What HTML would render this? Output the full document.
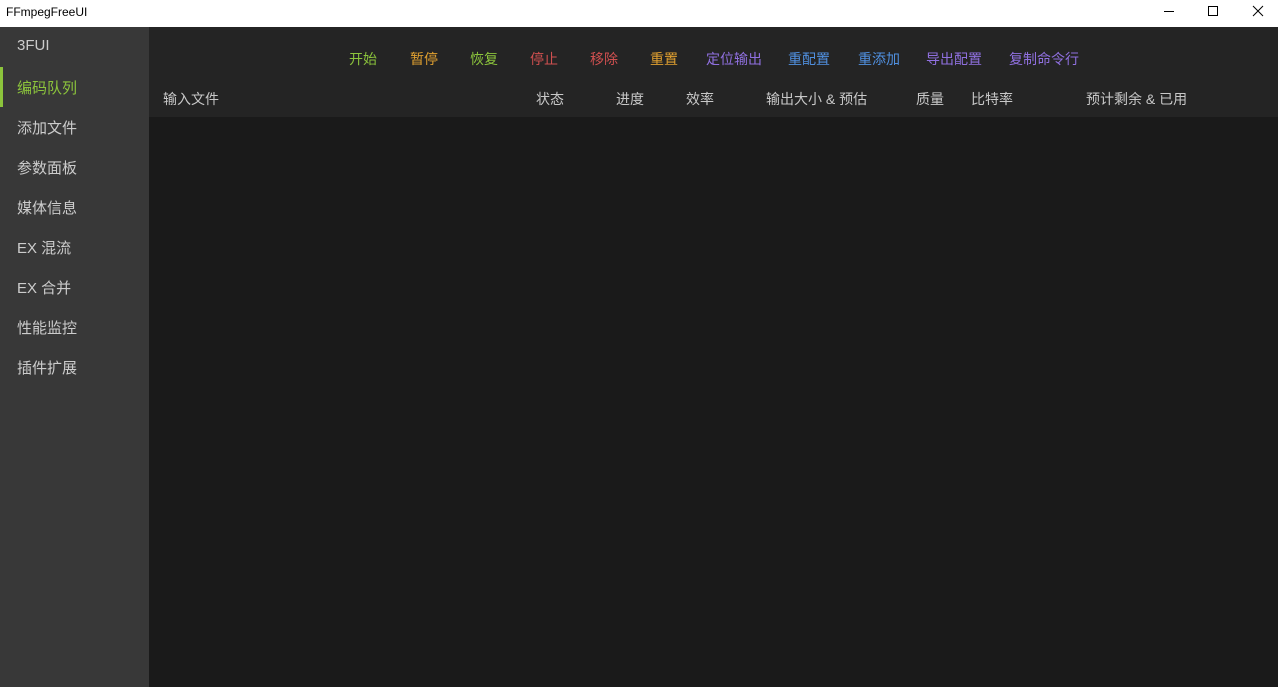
<!DOCTYPE html><html><head><meta charset="utf-8"><style>
body{margin:0;width:1278px;height:687px;overflow:hidden;background:#1a1a1a;font-family:"Liberation Sans","Noto Sans CJK SC",sans-serif;font-size:14px;position:relative}
.t{position:absolute;left:0;top:0;width:1278px;height:27px;background:#fff;color:#000;font-size:12px}
.t span{position:absolute;left:6px;top:5px}
.side{position:absolute;left:0;top:27px;width:149px;height:660px;background:#383838}
.side div{position:absolute;left:17px;color:#cccccc;font-size:15px}
.bar{position:absolute;left:0;top:40px;width:3px;height:40px;background:#8cc43c}
.main{position:absolute;left:149px;top:27px;width:1129px;height:90px;background:#242424}
.a{position:absolute;top:49px;font-size:14px}
.h{position:absolute;top:89px;color:#c8c8c8;font-size:14px}
</style></head><body>
<div class="t"><span>FFmpegFreeUI</span>
<svg style="position:absolute;left:1150px;top:0" width="128" height="27"><path d="M14 11.5h10" stroke="#000"/><path d="M58.5 6.5h9v9h-9z" stroke="#000" fill="none"/><path d="M103 6l10 10M113 6l-10 10" stroke="#000"/></svg></div>
<div class="side">
<div style="top:10px">3FUI</div><div style="top:50px;color:#8cc43c">编码队列</div><div style="top:90px">添加文件</div><div style="top:130px">参数面板</div><div style="top:170px">媒体信息</div><div style="top:210px">EX 混流</div><div style="top:250px">EX 合并</div><div style="top:290px">性能监控</div><div style="top:330px">插件扩展</div>
<span class="bar"></span></div>
<div class="main"></div>
<span class="a" style="left:349px;color:#8cc43c">开始</span>
<span class="a" style="left:410px;color:#e0a030">暂停</span>
<span class="a" style="left:470px;color:#8cc43c">恢复</span>
<span class="a" style="left:530px;color:#d05050">停止</span>
<span class="a" style="left:590px;color:#d05050">移除</span>
<span class="a" style="left:650px;color:#e0a030">重置</span>
<span class="a" style="left:706px;color:#9070e0">定位输出</span>
<span class="a" style="left:788px;color:#5090e0">重配置</span>
<span class="a" style="left:858px;color:#5090e0">重添加</span>
<span class="a" style="left:926px;color:#9070e0">导出配置</span>
<span class="a" style="left:1009px;color:#9070e0">复制命令行</span>
<span class="h" style="left:163px">输入文件</span>
<span class="h" style="left:536px">状态</span>
<span class="h" style="left:616px">进度</span>
<span class="h" style="left:686px">效率</span>
<span class="h" style="left:766px">输出大小 &amp; 预估</span>
<span class="h" style="left:916px">质量</span>
<span class="h" style="left:971px">比特率</span>
<span class="h" style="left:1086px">预计剩余 &amp; 已用</span>
</body></html>
